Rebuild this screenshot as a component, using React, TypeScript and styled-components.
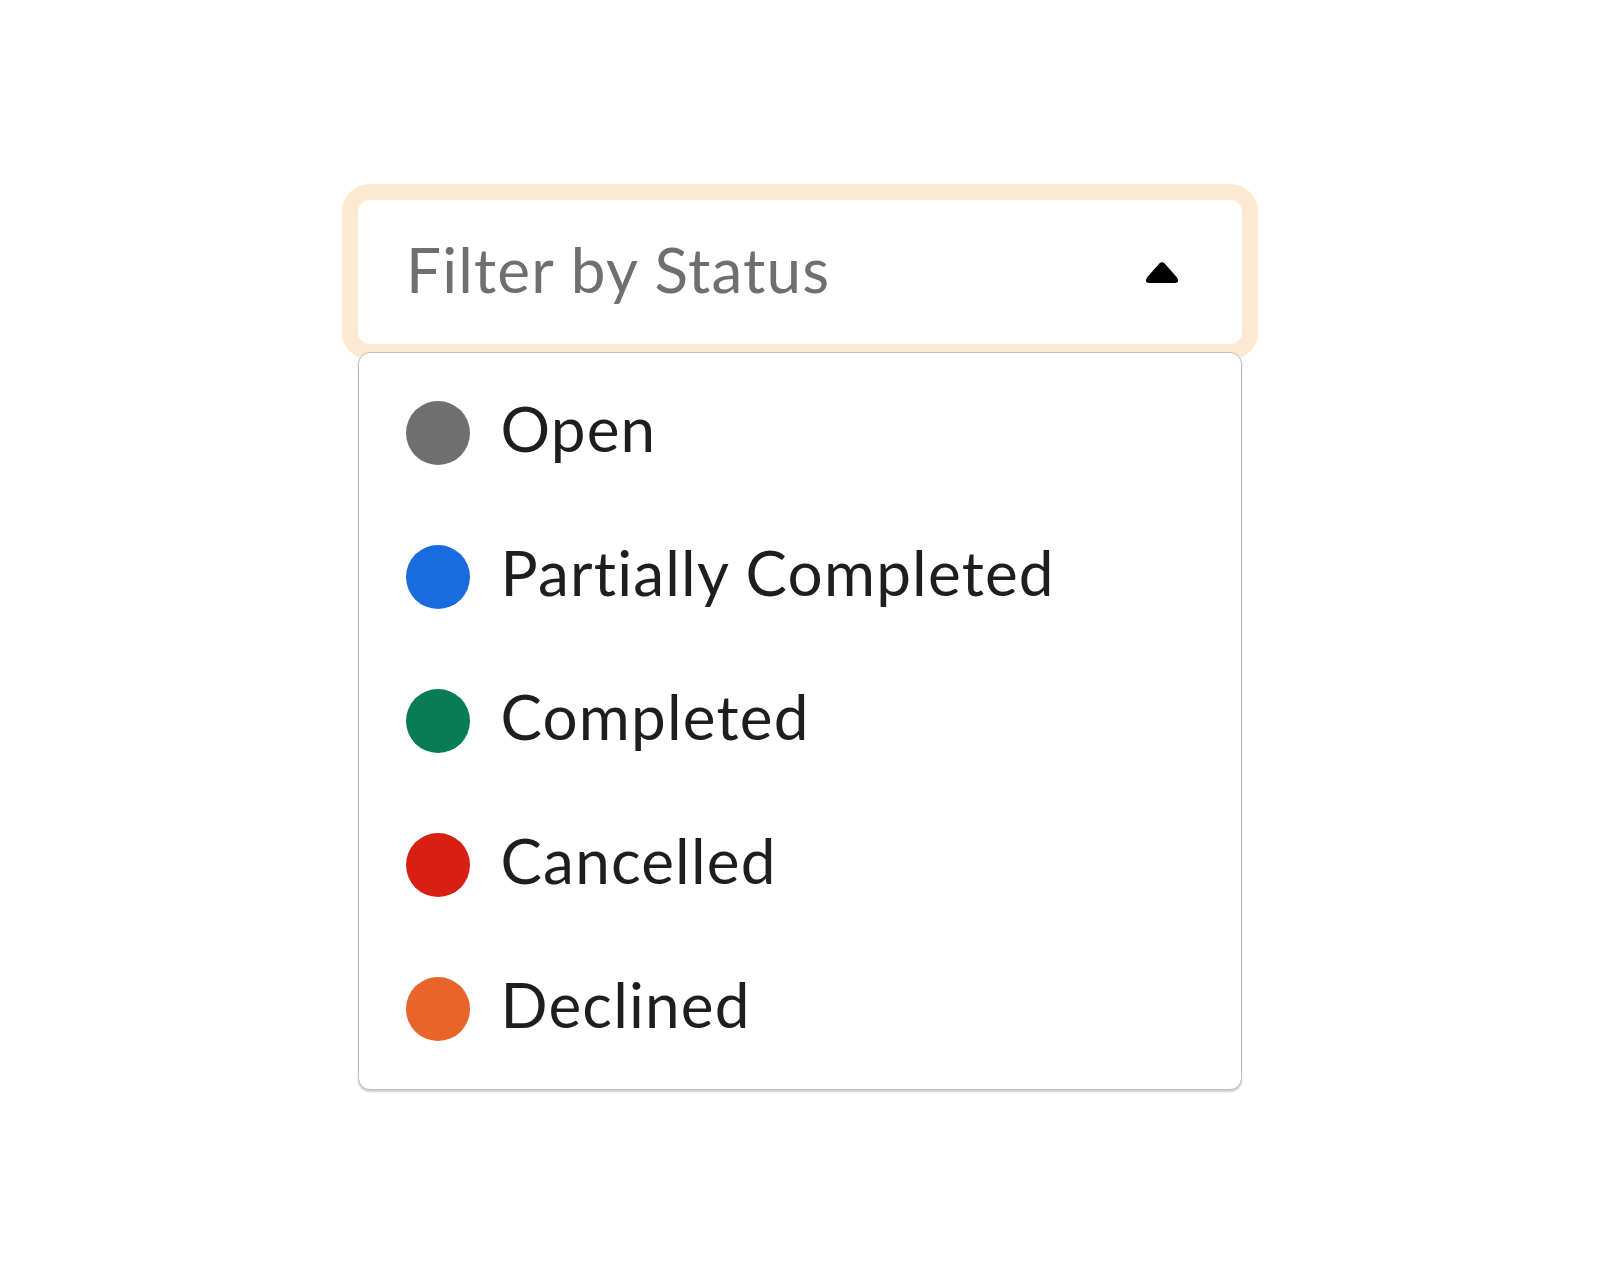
import React from 'react';
import styled, { createGlobalStyle } from 'styled-components';

const GlobalStyle = createGlobalStyle`
    body {
        margin: 0;
        background: #ffffff;
        font-family: "Lato", "Open Sans", sans-serif;
    }
`;

const statuses = [
    { label: 'Open', color: '#6f6f6f' },
    { label: 'Partially Completed', color: '#196be0' },
    { label: 'Completed', color: '#077c55' },
    { label: 'Cancelled', color: '#d81f13' },
    { label: 'Declined', color: '#e86428' },
];

const Page = styled.div`
    display: flex;
    justify-content: center;
    padding-top: 200px;
    height: 1288px;
    box-sizing: border-box;
`;

const Select = styled.div`
    position: relative;
    width: 884px;
    height: 144px;
`;

const Field = styled.div`
    display: flex;
    align-items: center;
    justify-content: space-between;
    height: 144px;
    box-sizing: border-box;
    padding: 0 63px 0 48px;
    background: #fff;
    border-radius: 12px;
    box-shadow: 0 0 0 16px #fde8d1;
`;

const Placeholder = styled.span`
    font-size: 62px;
    color: #6f6f6f;
    letter-spacing: 1.2px;
    padding-bottom: 6px;
`;

const Menu = styled.ul`
    position: absolute;
    top: 152px;
    left: 0;
    width: 100%;
    box-sizing: border-box;
    margin: 0;
    padding: 8px 0;
    list-style: none;
    background: #fff;
    border: 1.5px solid #bdbdbd;
    border-radius: 12px;
    box-shadow: 0 2px 2px rgba(0, 0, 0, 0.2);
`;

const Item = styled.li`
    display: flex;
    align-items: center;
    gap: 31px;
    height: 144px;
    padding-left: 46.5px;
    font-size: 62px;
    color: #1e1e1e;
    letter-spacing: 1.2px;
`;

const Label = styled.span`
    padding-bottom: 10px;
`;

const Dot = styled.span<{ $color: string }>`
    width: 64px;
    height: 64px;
    border-radius: 50%;
    background: ${p => p.$color};
    flex-shrink: 0;
`;

const Caret = () => (
    <svg width="34" height="23" viewBox="0 0 34 23">
        <path
            d="M14.3 2.6 Q17 -0.2 19.7 2.6 L32 16.6 Q35 22 29.5 22 L4.5 22 Q-1 22 2 16.6 Z"
            fill="#000"
        />
    </svg>
);

export default function App() {
    return (
        <Page>
            <GlobalStyle />
            <Select>
                <Field>
                    <Placeholder>Filter by Status</Placeholder>
                    <Caret />
                </Field>
                <Menu>
                    {statuses.map(s => (
                        <Item key={s.label}>
                            <Dot $color={s.color} />
                            <Label>{s.label}</Label>
                        </Item>
                    ))}
                </Menu>
            </Select>
        </Page>
    );
}
